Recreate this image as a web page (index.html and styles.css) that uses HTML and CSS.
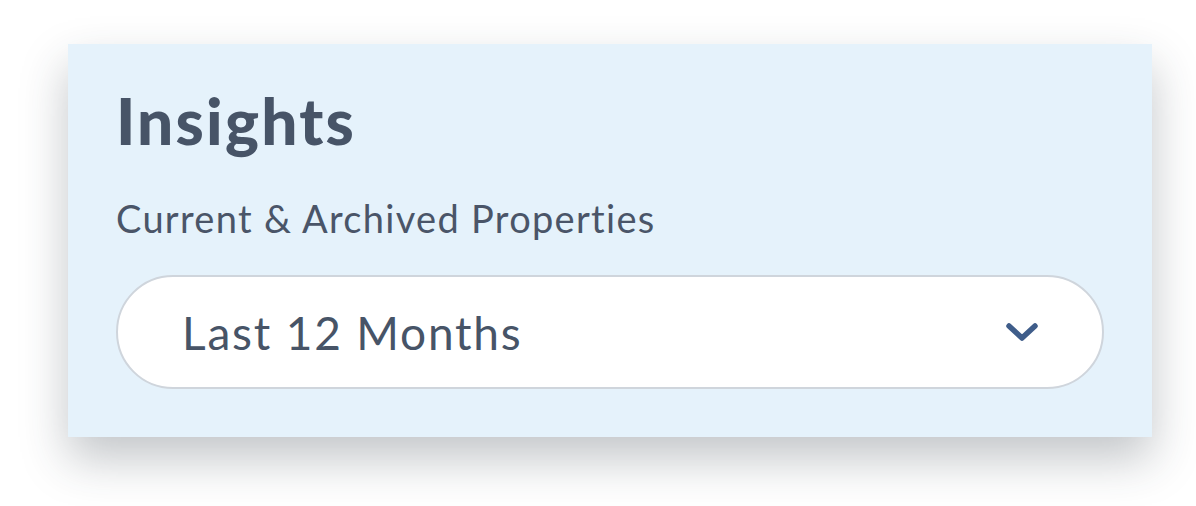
FILE: index.html
```html
<!DOCTYPE html>
<html>
<head>
  <title>Insights</title>
  <link rel="stylesheet" href="styles.css">
</head>
<body>
  <div class="insights-card">
    <h1 class="insights-title">Insights</h1>
    <div class="insights-sub">Current &amp; Archived Properties</div>
    <div class="period-select">
      <span class="period-label">Last 12 Months</span>
      <svg class="period-chevron" width="36" height="22" viewBox="0 0 36 22">
        <path d="M5 5 L18 17 L31 5" fill="none" stroke="#3f5d8a" stroke-width="5.5" stroke-linecap="round" stroke-linejoin="round"/>
      </svg>
    </div>
  </div>
</body>
</html>
```

FILE: styles.css
```css
html {
  height: 100%;
}

body {
  margin: 0;
  min-height: 100%;
  box-sizing: border-box;
  padding: 44px 44px 69px 68px;
  background-color: #ffffff;
  font-family: Lato, "Noto Sans", sans-serif;
  font-variant-ligatures: none;
}

.insights-card {
  width: 1084px;
  height: 393px;
  box-sizing: border-box;
  padding: 37px 48px 0 48px;
  background-color: #e5f2fb;
  box-shadow: 0 22px 44px rgba(40, 50, 60, 0.28);
}

.insights-title {
  margin: 0;
  font-size: 64px;
  line-height: 80px;
  font-weight: 900;
  letter-spacing: 2.2px;
  color: #475467;
}

.insights-sub {
  margin-top: 32px;
  font-size: 38px;
  line-height: 50px;
  letter-spacing: 1.3px;
  color: #4a5568;
}

.period-select {
  margin-top: 32px;
  height: 114px;
  box-sizing: border-box;
  border: 2px solid #cfd5dc;
  border-radius: 57px;
  background-color: #ffffff;
  display: flex;
  align-items: center;
  justify-content: space-between;
  padding: 0 62px 0 64px;
}

.period-label {
  font-size: 46px;
  letter-spacing: 1.8px;
  color: #475467;
}

.period-chevron {
  display: block;
}
```
